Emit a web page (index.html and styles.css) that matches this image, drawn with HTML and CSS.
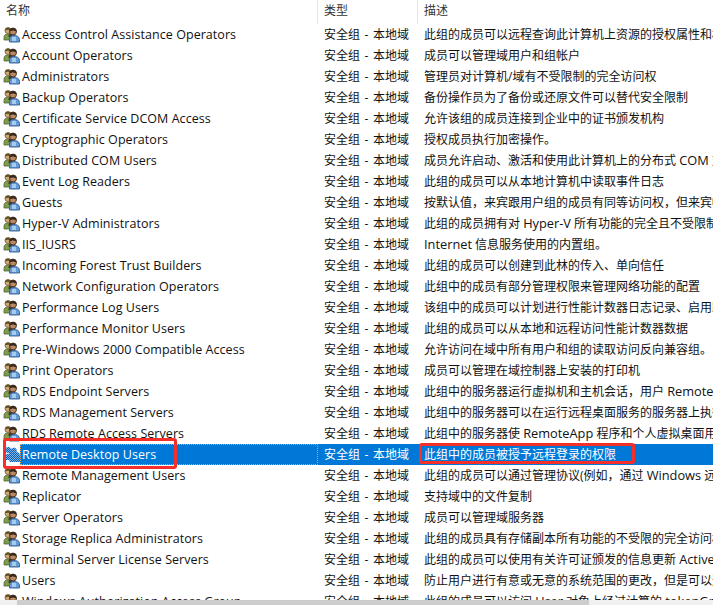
FILE: index.html
```html
<!DOCTYPE html>
<html lang="zh-CN">
<head>
<meta charset="utf-8">
<title>组</title>
<link rel="stylesheet" href="styles.css">
</head>
<body>
<svg class="defs" width="0" height="0" aria-hidden="true">
  <defs>
    <symbol id="grp" viewBox="0 0 17 17">
      <path d="M1 14v-2.500c0-2.500 1.500-3.500 4-3.500s4 1 4 3.500V14z" fill="#7f9c4c" stroke="#4f6230" stroke-width=".8"/>
      <circle cx="5" cy="4.500" r="3" fill="#d2a878" stroke="#6d5a30" stroke-width=".8"/>
      <path d="M2 4.500c0-3.500 6-4 6 0-2-1-4-1-6 0z" fill="#5f5024"/>
      <path d="M5.500 11c0-2 .5-3.500 2-4l4 1-1 4z" fill="#4a3424"/>
      <circle cx="10" cy="5.500" r="3.500" fill="#b98a62" stroke="#3d2a1c" stroke-width=".9"/>
      <path d="M6.500 6c-.5-5 7.500-5 7 0-2-2-5-2-7 0z" fill="#33241a"/>
      <path d="M6.500 16v-2.500c0-3 2-4 4.500-4s5.500 1 5.500 4V16z" fill="#659cd6" stroke="#305c8e" stroke-width=".9"/>
      <path d="M9 11h4v4H9z" fill="#a6cbee"/>
    </symbol>
    <pattern id="dither" width="2" height="2" patternUnits="userSpaceOnUse">
      <rect width="2" height="2" fill="#7fb0e0"/>
      <rect width="1" height="1" fill="#0a62b8"/>
      <rect x="1" y="1" width="1" height="1" fill="#0a62b8"/>
    </pattern>
    <symbol id="grp-sel" viewBox="0 0 17 17">
      <path d="M1 14v-2.500c0-2.500 1.500-3.500 4-3.500.5 0 1-.5 1-1-3 0-4-1-4-3 0-3.500 5-4 6-1 3-3 7-.5 5.500 3 2 0 3.500 1.500 3.500 4V16H6.500v-2z" fill="url(#dither)"/>
    </symbol>
  </defs>
</svg>
<main class="list">
  <div class="head">
    <div class="hcell c1">名称</div>
    <div class="hcell c2">类型</div>
    <div class="hcell c3">描述</div>
  </div>
  <div class="row"><div class="c1"><svg class="ico"><use href="#grp"/></svg><span class="name">Access Control Assistance Operators</span></div><div class="c2">安全组 - 本地域</div><div class="c3">此组的成员可以远程查询此计算机上资源的授权属性和权限。</div></div>
  <div class="row"><div class="c1"><svg class="ico"><use href="#grp"/></svg><span class="name">Account Operators</span></div><div class="c2">安全组 - 本地域</div><div class="c3">成员可以管理域用户和组帐户</div></div>
  <div class="row"><div class="c1"><svg class="ico"><use href="#grp"/></svg><span class="name">Administrators</span></div><div class="c2">安全组 - 本地域</div><div class="c3">管理员对计算机/域有不受限制的完全访问权</div></div>
  <div class="row"><div class="c1"><svg class="ico"><use href="#grp"/></svg><span class="name">Backup Operators</span></div><div class="c2">安全组 - 本地域</div><div class="c3">备份操作员为了备份或还原文件可以替代安全限制</div></div>
  <div class="row"><div class="c1"><svg class="ico"><use href="#grp"/></svg><span class="name">Certificate Service DCOM Access</span></div><div class="c2">安全组 - 本地域</div><div class="c3">允许该组的成员连接到企业中的证书颁发机构</div></div>
  <div class="row"><div class="c1"><svg class="ico"><use href="#grp"/></svg><span class="name">Cryptographic Operators</span></div><div class="c2">安全组 - 本地域</div><div class="c3">授权成员执行加密操作。</div></div>
  <div class="row"><div class="c1"><svg class="ico"><use href="#grp"/></svg><span class="name">Distributed COM Users</span></div><div class="c2">安全组 - 本地域</div><div class="c3">成员允许启动、激活和使用此计算机上的分布式 <span class="lat">COM</span> 对象。</div></div>
  <div class="row"><div class="c1"><svg class="ico"><use href="#grp"/></svg><span class="name">Event Log Readers</span></div><div class="c2">安全组 - 本地域</div><div class="c3">此组的成员可以从本地计算机中读取事件日志</div></div>
  <div class="row"><div class="c1"><svg class="ico"><use href="#grp"/></svg><span class="name">Guests</span></div><div class="c2">安全组 - 本地域</div><div class="c3">按默认值，来宾跟用户组的成员有同等访问权，但来宾帐户的限制更多</div></div>
  <div class="row"><div class="c1"><svg class="ico"><use href="#grp"/></svg><span class="name">Hyper-V Administrators</span></div><div class="c2">安全组 - 本地域</div><div class="c3">此组的成员拥有对 <span class="lat">Hyper-V</span> 所有功能的完全且不受限制的访问权限。</div></div>
  <div class="row"><div class="c1"><svg class="ico"><use href="#grp"/></svg><span class="name">IIS_IUSRS</span></div><div class="c2">安全组 - 本地域</div><div class="c3"><span class="lat">Internet</span> 信息服务使用的内置组。</div></div>
  <div class="row"><div class="c1"><svg class="ico"><use href="#grp"/></svg><span class="name">Incoming Forest Trust Builders</span></div><div class="c2">安全组 - 本地域</div><div class="c3">此组的成员可以创建到此林的传入、单向信任</div></div>
  <div class="row"><div class="c1"><svg class="ico"><use href="#grp"/></svg><span class="name">Network Configuration Operators</span></div><div class="c2">安全组 - 本地域</div><div class="c3">此组中的成员有部分管理权限来管理网络功能的配置</div></div>
  <div class="row"><div class="c1"><svg class="ico"><use href="#grp"/></svg><span class="name">Performance Log Users</span></div><div class="c2">安全组 - 本地域</div><div class="c3">该组中的成员可以计划进行性能计数器日志记录、启用跟踪记录提供程序</div></div>
  <div class="row"><div class="c1"><svg class="ico"><use href="#grp"/></svg><span class="name">Performance Monitor Users</span></div><div class="c2">安全组 - 本地域</div><div class="c3">此组的成员可以从本地和远程访问性能计数器数据</div></div>
  <div class="row"><div class="c1"><svg class="ico"><use href="#grp"/></svg><span class="name">Pre-Windows 2000 Compatible Access</span></div><div class="c2">安全组 - 本地域</div><div class="c3">允许访问在域中所有用户和组的读取访问反向兼容组。</div></div>
  <div class="row"><div class="c1"><svg class="ico"><use href="#grp"/></svg><span class="name">Print Operators</span></div><div class="c2">安全组 - 本地域</div><div class="c3">成员可以管理在域控制器上安装的打印机</div></div>
  <div class="row"><div class="c1"><svg class="ico"><use href="#grp"/></svg><span class="name">RDS Endpoint Servers</span></div><div class="c2">安全组 - 本地域</div><div class="c3">此组中的服务器运行虚拟机和主机会话，用户 <span class="lat">RemoteApp</span> 程序</div></div>
  <div class="row"><div class="c1"><svg class="ico"><use href="#grp"/></svg><span class="name">RDS Management Servers</span></div><div class="c2">安全组 - 本地域</div><div class="c3">此组中的服务器可以在运行远程桌面服务的服务器上执行例行管理操作</div></div>
  <div class="row"><div class="c1"><svg class="ico"><use href="#grp"/></svg><span class="name">RDS Remote Access Servers</span></div><div class="c2">安全组 - 本地域</div><div class="c3">此组中的服务器使 <span class="lat">RemoteApp</span> 程序和个人虚拟桌面用户能够访问这些资源</div></div>
  <div class="row selected"><div class="c1"><svg class="ico"><use href="#grp-sel"/></svg><span class="name">Remote Desktop Users</span></div><div class="c2">安全组 - 本地域</div><div class="c3">此组中的成员被授予远程登录的权限</div></div>
  <div class="row"><div class="c1"><svg class="ico"><use href="#grp"/></svg><span class="name">Remote Management Users</span></div><div class="c2">安全组 - 本地域</div><div class="c3">此组的成员可以通过管理协议(例如，通过 <span class="lat">Windows</span> 远程管理服务)访问此计算机</div></div>
  <div class="row"><div class="c1"><svg class="ico"><use href="#grp"/></svg><span class="name">Replicator</span></div><div class="c2">安全组 - 本地域</div><div class="c3">支持域中的文件复制</div></div>
  <div class="row"><div class="c1"><svg class="ico"><use href="#grp"/></svg><span class="name">Server Operators</span></div><div class="c2">安全组 - 本地域</div><div class="c3">成员可以管理域服务器</div></div>
  <div class="row"><div class="c1"><svg class="ico"><use href="#grp"/></svg><span class="name">Storage Replica Administrators</span></div><div class="c2">安全组 - 本地域</div><div class="c3">此组的成员具有存储副本所有功能的不受限的完全访问权限</div></div>
  <div class="row"><div class="c1"><svg class="ico"><use href="#grp"/></svg><span class="name">Terminal Server License Servers</span></div><div class="c2">安全组 - 本地域</div><div class="c3">此组的成员可以使用有关许可证颁发的信息更新 <span class="lat">Active Directory</span></div></div>
  <div class="row"><div class="c1"><svg class="ico"><use href="#grp"/></svg><span class="name">Users</span></div><div class="c2">安全组 - 本地域</div><div class="c3">防止用户进行有意或无意的系统范围的更改，但是可以运行大部分应用程序</div></div>
  <div class="row"><div class="c1"><svg class="ico"><use href="#grp"/></svg><span class="name">Windows Authorization Access Group</span></div><div class="c2">安全组 - 本地域</div><div class="c3">此组的成员可以访问 <span class="lat">User</span> 对象上经过计算的 <span class="lat">tokenGroupsGlobalAndUniversal</span></div></div>
  <div class="scrollbar"><div class="thumb"></div></div>
  <div class="mark mark-name"></div>
  <div class="mark mark-desc"></div>
</main>
</body>
</html>
```
FILE: styles.css
```css
html, body {
  margin: 0;
  padding: 0;
  height: 605px;
  overflow: hidden;
  background: #fff;
}
.defs { position: absolute; }
.list {
  position: relative;
  width: 713px;
  height: 605px;
  overflow: hidden;
  font-family: "Open Sans", "Noto Sans CJK SC", sans-serif;
  font-size: 12px;
  color: #111;
}
.head {
  display: grid;
  grid-template-columns: 318px 100px 295px;
  height: 24px;
}
.hcell {
  padding-left: 6px;
  line-height: 22px;
  color: #333;
  border-right: 1px solid #e5e5e5;
  box-sizing: border-box;
}
.hcell.c3 { border-right: 0; }
.row {
  display: grid;
  grid-template-columns: 318px 100px 295px;
  height: 21px;
  line-height: 21px;
  white-space: nowrap;
}
.c1 { display: flex; align-items: center; overflow: hidden; }
.hcell.c1 { display: block; }
.row .c2, .row .c3 { padding-left: 6px; overflow: hidden; }
.row .c2 { word-spacing: 1.500px; }
.lat { font-size: 12.800px; }
.ico { width: 17px; height: 17px; margin-left: 3px; flex: none; }
.name { margin-left: 2px; letter-spacing: .05px; font-size: 12.500px; }
.selected { background: linear-gradient(#0078d7, #0078d7) 20px 0 / 693px 100% no-repeat; color: #fff; }
.selected .name {
  flex: 1;
  align-self: stretch;
  margin-left: 0;
  padding-left: 2px;
  outline: 1px dotted #ff9a3c;
  outline-offset: -1px;
}
.scrollbar {
  position: absolute;
  left: 0;
  right: 0;
  bottom: 0;
  height: 5px;
  background: #f0f0f0;
}
.thumb { margin-left: 17px; width: 572px; height: 100%; background: #cdcdcd; }
.mark { position: absolute; border: 3px solid #f5302a; border-radius: 3px; box-sizing: border-box; }
.mark-name { left: 3px; top: 438px; width: 174px; height: 31px; }
.mark-desc { left: 419px; top: 443px; width: 216px; height: 21px; }
```
